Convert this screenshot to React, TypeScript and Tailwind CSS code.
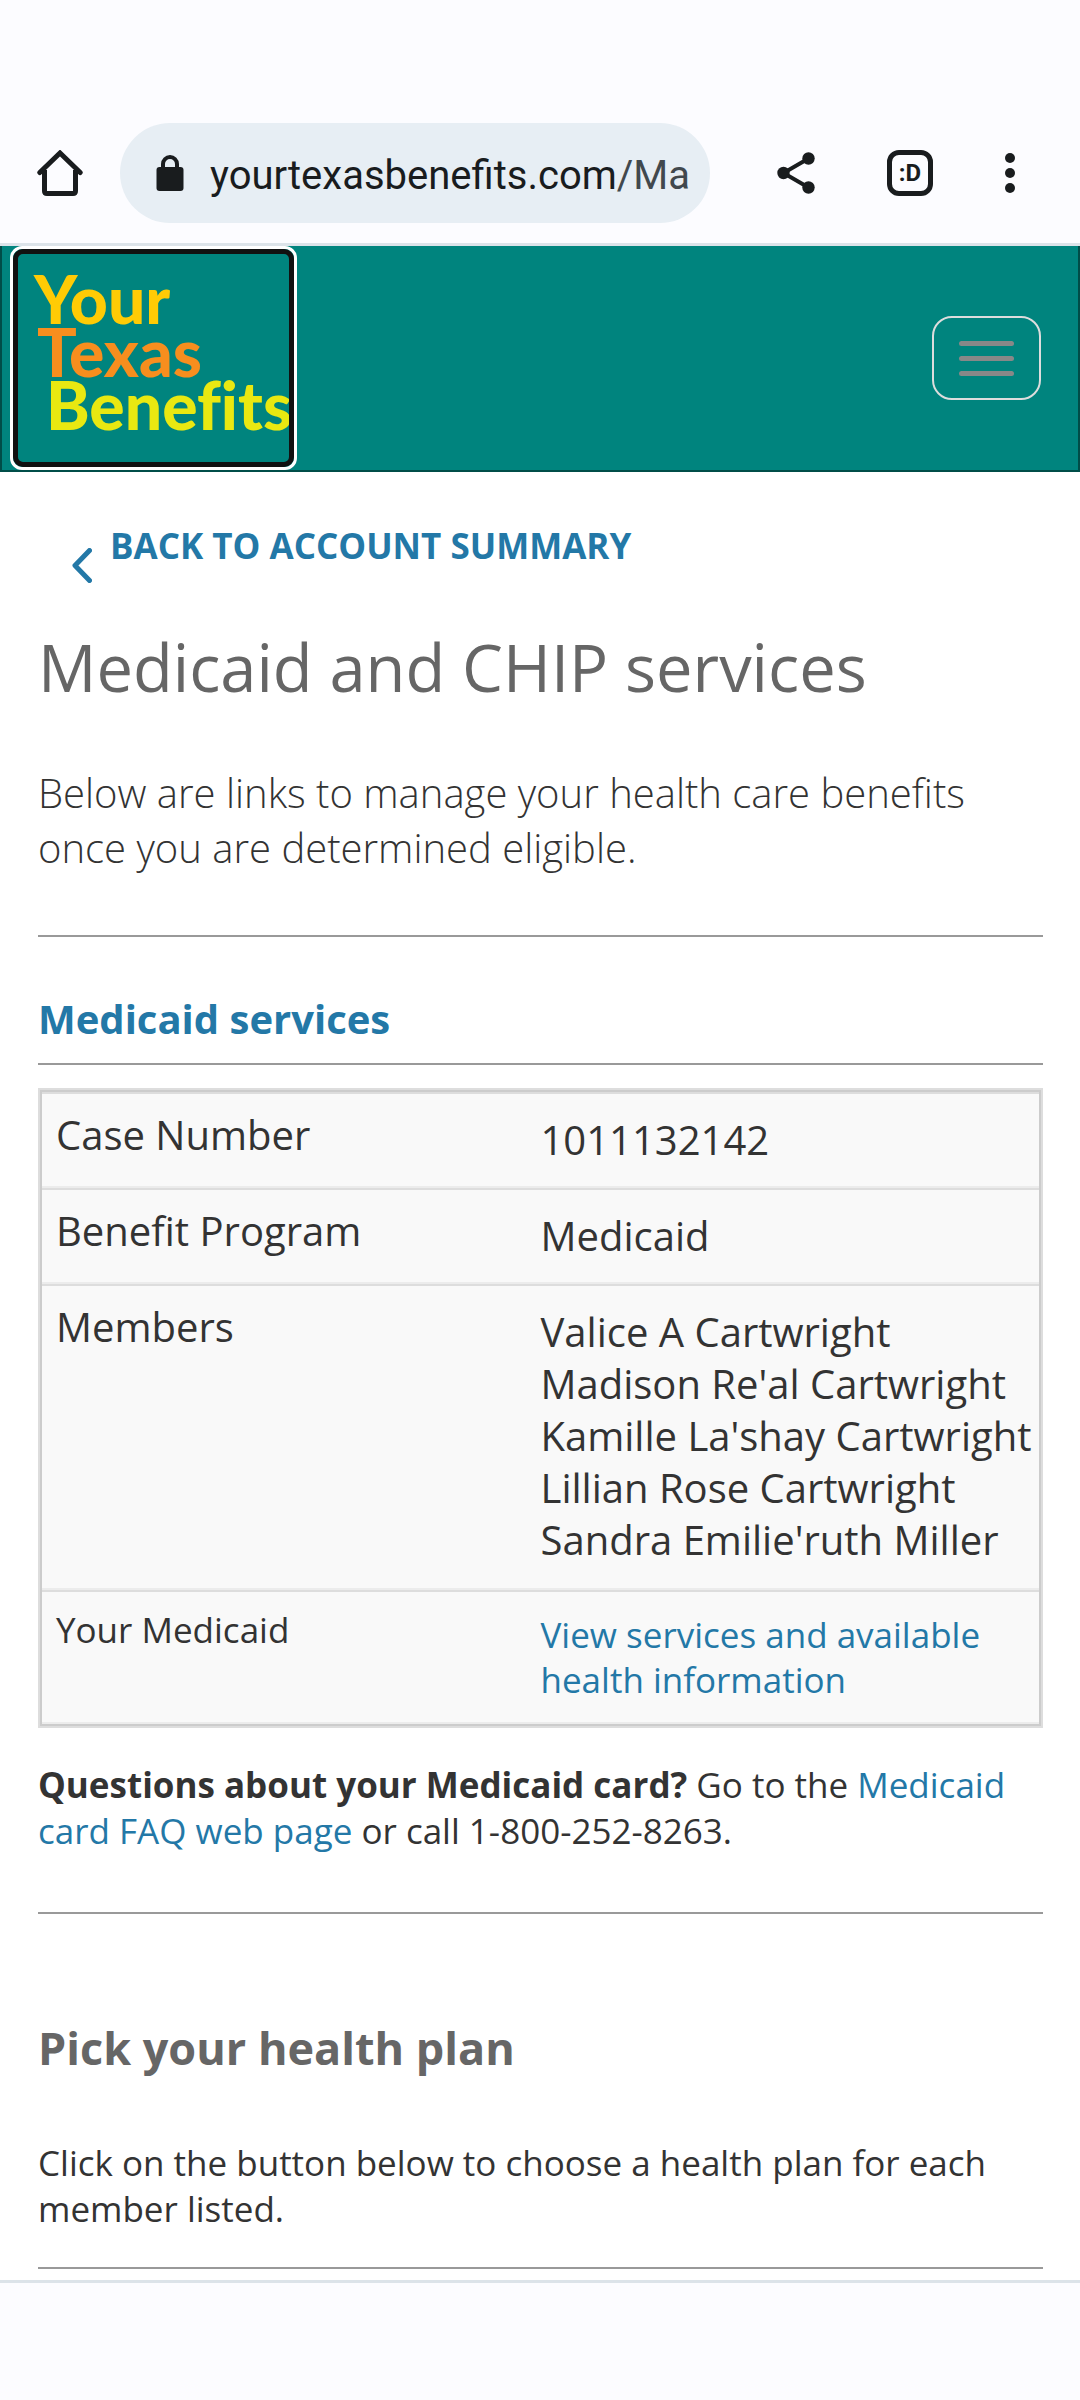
import type { ReactNode } from 'react'

const members = [
  'Valice A Cartwright',
  "Madison Re'al Cartwright",
  "Kamille La'shay Cartwright",
  'Lillian Rose Cartwright',
  "Sandra Emilie'ruth Miller",
]

function BrowserBar() {
  return (
    <div className="flex items-center bg-[#fcfcff] border-b-3 border-[#dce3e9] pt-[123px] pb-5 pl-[37px] pr-[65px] text-[#191c1e]">
      <button type="button" aria-label="Home" className="flex-shrink-0">
        <svg width="46" height="46" viewBox="0 0 46 46" fill="none" stroke="currentColor" strokeWidth="5" strokeLinejoin="round" strokeLinecap="round">
          <path d="M2.8 22.5 23 3l20.200 19.500" strokeLinejoin="miter" />
          <path d="M7.500 20v21q0 2.500 2.500 2.500h26q2.500 0 2.500-2.500V20" strokeLinecap="butt" />
        </svg>
      </button>

      <div className="flex flex-1 min-w-0 items-center h-[100px] ml-[37px] pl-9 pr-4 rounded-full bg-[#e7eef4]">
        <svg className="flex-shrink-0" width="28" height="36" viewBox="0 0 28 36">
          <rect x="0.500" y="12" width="27" height="24" rx="3" fill="currentColor" />
          <path d="M7 13V9a7 7 0 0 1 14 0v4" fill="none" stroke="currentColor" strokeWidth="4" />
        </svg>
        <p className="ml-[26px] pt-[6px] whitespace-nowrap overflow-hidden font-[Roboto,sans-serif] text-[40px] leading-[52px]">
          yourtexasbenefits.com<span className="text-[#41484d]">/Ma</span>
        </p>
      </div>

      <div className="flex flex-shrink-0 items-center ml-[67px]">
        <button type="button" aria-label="Share">
          <svg width="38" height="42" viewBox="0 0 38 42" fill="currentColor">
            <path d="M31.500 6.500 6.500 21l25 14.500" fill="none" stroke="currentColor" strokeWidth="4" />
            <circle cx="31.500" cy="6.500" r="6.200" />
            <circle cx="6.500" cy="21" r="6.200" />
            <circle cx="31.500" cy="35.500" r="6.200" />
          </svg>
        </button>
        <button
          type="button"
          aria-label="Tabs"
          className="flex items-center justify-center w-[46px] h-[46px] ml-[72px] border-5 border-[#191c1e] rounded-xl font-[Roboto,sans-serif] font-bold text-[24px] leading-6"
        >
          :D
        </button>
        <button type="button" aria-label="More options" className="ml-[72px]">
          <svg width="10" height="40" viewBox="0 0 10 40" fill="currentColor">
            <circle cx="5" cy="5" r="5" />
            <circle cx="5" cy="20" r="5" />
            <circle cx="5" cy="35" r="5" />
          </svg>
        </button>
      </div>
    </div>
  )
}

function SiteHeader() {
  return (
    <header className="flex items-center justify-between bg-[#00847e] border-x-2 border-b-2 border-[#004d48] pl-2 pr-[37px]">
      <a href="#" className="block rounded-xl border-3 border-white w-[287px]">
        <span className="block h-[218px] rounded-[10px] border-5 border-[#111] overflow-hidden pt-[18px] pl-4 font-[Lato,sans-serif] font-black text-[66px] leading-[53px] whitespace-nowrap [font-variant-ligatures:none]">
          <span className="block text-[#ffcb05]">Your</span>
          <span className="block pl-[3px] text-[#f78e1e]">Texas</span>
          <span className="block pl-3 text-[#e9e811]">Benefits</span>
        </span>
      </a>
      <button
        type="button"
        aria-label="Menu"
        className="flex flex-col items-center justify-center gap-[10px] w-[109px] h-[84px] rounded-[20px] border-2 border-[#ddd]"
      >
        <span className="w-[55px] h-[5px] rounded-full bg-[#888]" />
        <span className="w-[55px] h-[5px] rounded-full bg-[#888]" />
        <span className="w-[55px] h-[5px] rounded-full bg-[#888]" />
      </button>
    </header>
  )
}

function Row({ label, children, small }: { label: string; children: ReactNode; small?: boolean }) {
  return (
    <tr className={small ? 'text-[35px] leading-[45px]' : 'text-[40px] leading-[52px]'}>
      <th scope="row" className="w-1/2 align-top text-left font-normal pt-[15px] pl-[14px] border-t-2 border-t-[#ddd] border-b-2 border-b-[#ececec]">
        {label}
      </th>
      <td className="align-top py-5 border-t-2 border-t-[#ddd] border-b-2 border-b-[#ececec]">
        {children}
      </td>
    </tr>
  )
}

export default function App() {
  return (
    <div className="flex flex-col min-h-screen bg-[#fcfcff] font-['Open_Sans',sans-serif] text-[#333]">
      <BrowserBar />
      <SiteHeader />

      <main className="bg-white pl-[38px] pr-[37px] pt-[51px] pb-[11px] text-[35px] leading-[46px]">
        <a href="#" className="flex items-start pl-[34px] text-[#2378a7] font-bold">
          <svg className="mt-[25px]" width="20" height="35" viewBox="0 0 20 35" fill="none" stroke="currentColor" strokeWidth="5" strokeLinecap="round" strokeLinejoin="round">
            <path d="M17.500 2.500 3 17.500l14.500 15" />
          </svg>
          <span className="ml-[18px]">BACK TO ACCOUNT SUMMARY</span>
        </a>

        <h1 className="mt-11 text-[65px] leading-[80px] text-[#666]">Medicaid and CHIP services</h1>
        <p className="mt-[58px] text-[40px] leading-[55px] font-light">
          Below are links to manage your health care benefits once you are determined eligible.
        </p>
        <hr className="mt-[60px] border-t-2 border-[#999]" />

        <h2 className="mt-14 text-[40px] leading-[52px] font-bold text-[#2378a7]">Medicaid services</h2>
        <hr className="mt-[18px] border-t-2 border-[#999]" />

        {/* Case details */}
        <div className="mt-[23px] border-2 border-[#ddd]">
          <table className="w-full table-fixed border-separate border-spacing-0 border-2 border-[#ccc] bg-[#f9f9f9]">
            <tbody>
              <Row label="Case Number">1011132142</Row>
              <Row label="Benefit Program">Medicaid</Row>
              <Row label="Members">
                <ul className="pb-0.5">
                  {members.map((name) => (
                    <li key={name} className="whitespace-nowrap">{name}</li>
                  ))}
                </ul>
              </Row>
              <Row label="Your Medicaid" small>
                <a href="#" className="text-[#2378a7]">View services and available health information</a>
              </Row>
            </tbody>
          </table>
        </div>

        <p className="mt-[34px]">
          <strong className="font-bold">Questions about your Medicaid card?</strong> Go to the{' '}
          <a href="#" className="text-[#2378a7]">Medicaid card FAQ web page</a> or call 1-800-252-8263.
        </p>
        <hr className="mt-[58px] border-t-2 border-[#999]" />

        {/* Health plan */}
        <h2 className="mt-[104px] text-[45px] leading-[60px] font-bold text-[#666]">Pick your health plan</h2>
        <p className="mt-[62px]">Click on the button below to choose a health plan for each member listed.</p>
        <hr className="mt-[35px] border-t-2 border-[#999]" />
      </main>

      <div className="flex-1 border-t-3 border-[#dce3e9]" />
    </div>
  )
}
